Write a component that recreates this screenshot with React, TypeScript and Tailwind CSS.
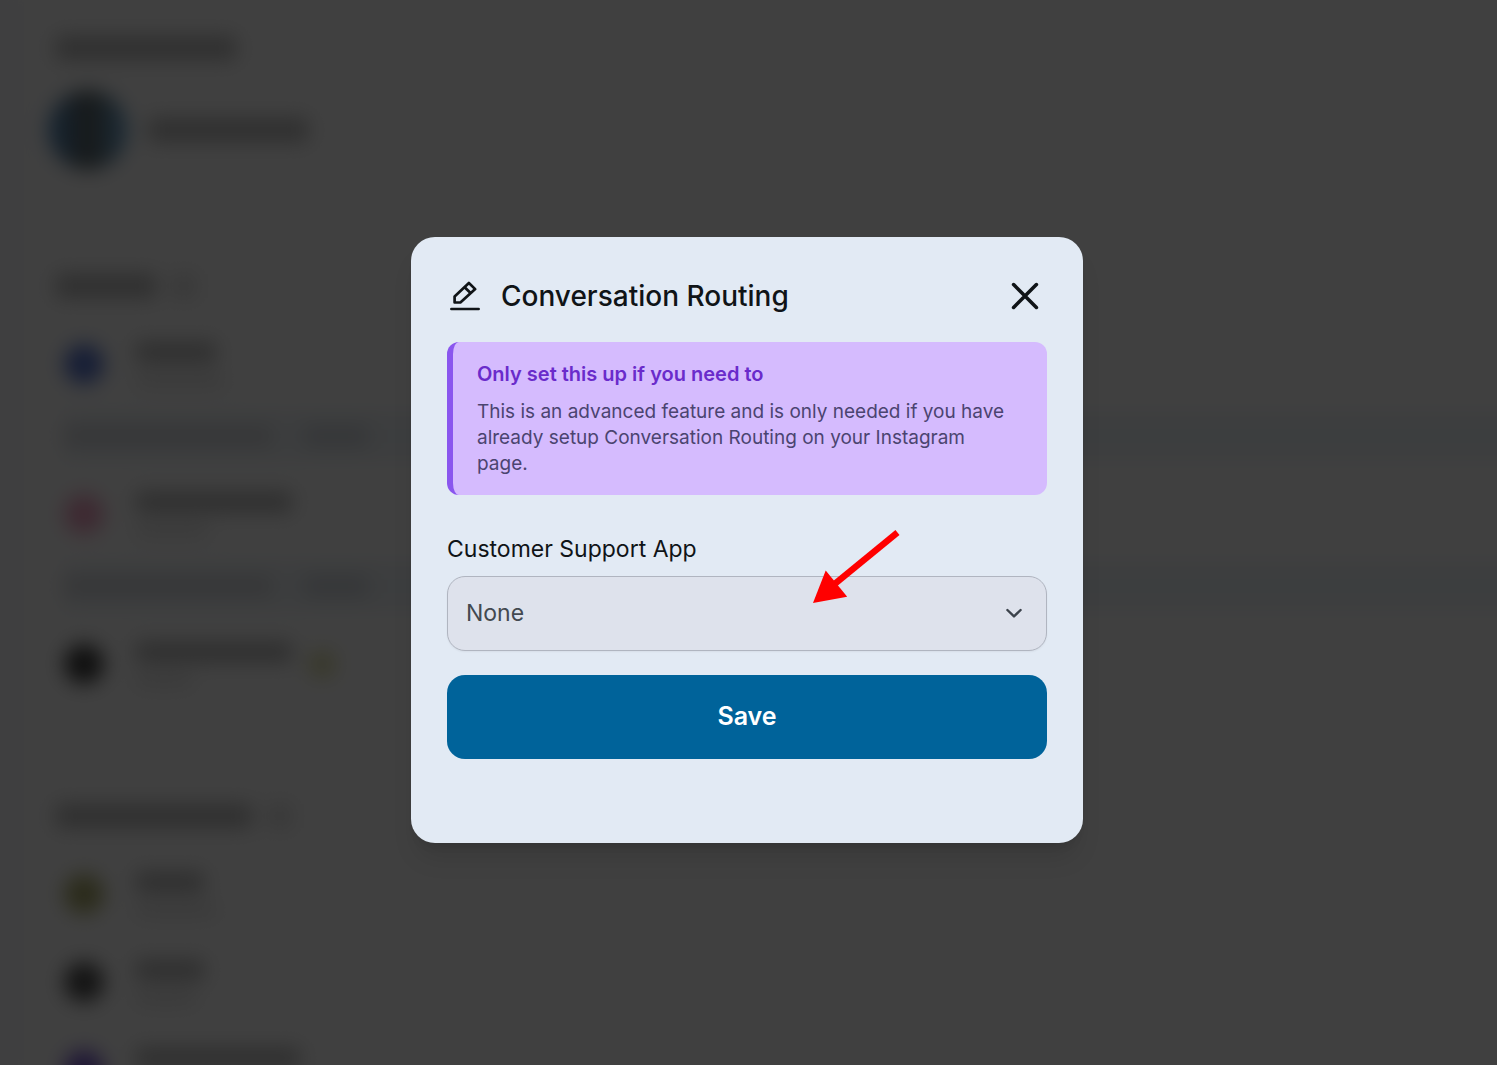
import { useState } from "react";

type RowProps = {
  dot: string;
  name: string;
  sub: string;
  badge?: boolean;
};

function Row({ dot, name, sub, badge }: RowProps) {
  return (
    <div className="flex h-12 items-center pl-10">
      <div className={`size-10 rounded-full ${dot}`} />
      <div className="ml-8 flex flex-col gap-3">
        <div className={`h-5 bg-[#b8b8b8] ${name}`} />
        <div className={`h-3 bg-[#e0e0e0] ${sub}`} />
      </div>
      {badge && <div className="ml-4 size-7 rounded-full bg-[#e0e0a8]" />}
    </div>
  );
}

function RoutingRow() {
  return (
    <div className="mt-6 -mr-8 mb-7.5 ml-10 flex h-12 items-center gap-8 bg-[#f0f5f9]">
      <div className="h-5 w-52 bg-[#d6d8dd]" />
      <div className="h-5 w-16 bg-[#d3d8df]" />
    </div>
  );
}

function SectionTitle({ title, count }: { title: string; count: string }) {
  return (
    <div className="flex h-6 gap-4 pl-8">
      <div className={`bg-[#bcbcbc] ${title}`} />
      <div className={`bg-[#dedede] ${count}`} />
    </div>
  );
}

function PageBehind() {
  return (
    <div aria-hidden="true" className="absolute inset-0 flex overflow-hidden bg-white">
      <div className="flex w-full blur-[10px]">
        <div className="-ml-8 w-14 shrink-0 bg-[#f9f9ff]" />
        <div className="flex-1">
          <section className="pt-9">
            <SectionTitle title="w-45" count="w-0" />
            <div className="mt-7.5 flex h-20 items-center gap-5 pl-6">
              <div className="size-20 rounded-full bg-linear-to-r from-[#4f92d0] via-[#5c6464] to-[#6cb0e4]" />
              <div className="h-6 w-40 bg-[#bcbcbc]" />
            </div>
          </section>

          <section className="mt-26">
            <SectionTitle title="w-25" count="w-6" />
            <div className="mt-10.5">
              <Row dot="bg-[#5a78d4]" name="w-20" sub="w-22" />
              <RoutingRow />
              <Row dot="bg-[#f4a4c4]" name="w-39" sub="w-18" />
              <RoutingRow />
              <Row dot="bg-[#404040]" name="w-39" sub="w-14" badge />
            </div>
          </section>

          <section className="mt-29">
            <SectionTitle title="w-49" count="w-6" />
            <div className="mt-10.5 flex flex-col gap-10">
              <Row dot="bg-[#acac6c]" name="w-17" sub="w-20" />
              <Row dot="bg-[#505050]" name="w-17" sub="w-15" />
              <Row dot="bg-[#7c5cd4]" name="w-41" sub="w-20" />
            </div>
          </section>
        </div>
      </div>
      <div className="absolute inset-0 bg-black/75" />
    </div>
  );
}

function EditIcon() {
  return (
    <svg className="size-8" viewBox="0 0 32 32" fill="none" stroke="currentColor" strokeWidth="2.7">
      <path d="M5.6 22.5V16.4L19.9 3L26.2 9.1L11.4 22.5Z" strokeLinejoin="round" />
      <path d="M15.6 7.2L21.8 13.2" />
      <path d="M2.4 29H29.6" strokeLinecap="round" />
    </svg>
  );
}

export default function App() {
  const [open, setOpen] = useState(true);
  const [supportApp, setSupportApp] = useState("none");

  const handleSubmit = (e: React.FormEvent) => {
    e.preventDefault();
    setOpen(false);
  };

  return (
    <div className="relative flex min-h-screen items-center justify-center overflow-hidden pt-[15px] pr-[3px] font-['Inter',sans-serif] text-[#101417]">
      <PageBehind />

      {open && (
        <div
          role="dialog"
          aria-modal="true"
          aria-labelledby="dialog-title"
          className="relative w-full max-w-2xl rounded-3xl bg-[#e2eaf4] px-9 pt-9 pb-[84px] shadow-xl"
        >
          <div className="flex h-[46px] items-center">
            <div className="ml-0.5">
              <EditIcon />
            </div>
            <h2 id="dialog-title" className="ml-5 text-[28px] font-medium">
              Conversation Routing
            </h2>
            <button
              type="button"
              aria-label="Close"
              onClick={() => setOpen(false)}
              className="ml-auto flex size-11 items-center justify-center"
            >
              <svg className="size-7" viewBox="0 0 28 28" fill="none" stroke="currentColor" strokeWidth="3.6" strokeLinecap="round">
                <path d="M2.6 2.6L25.4 25.4M25.4 2.6L2.6 25.4" />
              </svg>
            </button>
          </div>

          <div className="mt-[23px] rounded-xl border-l-6 border-[#8a56ee] bg-[#d5bbfe] pt-5 pr-8 pb-[18px] pl-6">
            <p className="text-xl leading-6 font-semibold text-[#6a2bcb]">
              Only set this up if you need to
            </p>
            <p className="mt-[13px] text-[19px] leading-[26px] text-[#4b4470]">
              This is an advanced feature and is only needed if you have already
              setup Conversation Routing on your Instagram page.
            </p>
          </div>

          <form onSubmit={handleSubmit}>
            <label htmlFor="support-app" className="mt-9 block text-[23px] leading-9">
              Customer Support App
            </label>
            <div className="relative mt-[9px]">
              <select
                id="support-app"
                value={supportApp}
                onChange={(e) => setSupportApp(e.target.value)}
                className="block h-[75px] w-full appearance-none rounded-[18px] border border-[#b0b5c0] bg-[#dee2ec] px-[18px] text-[23px] text-[#434950] shadow-xs"
              >
                <option value="none">None</option>
              </select>
              <svg
                className="pointer-events-none absolute top-7 right-6 h-[18px] w-[18px] text-[#3c434c]"
                viewBox="0 0 18 18"
                fill="none"
                stroke="currentColor"
                strokeWidth="2.4"
                strokeLinecap="round"
                strokeLinejoin="round"
              >
                <path d="M2.4 6L9 12.4L15.6 6" />
              </svg>
              <svg
                className="pointer-events-none absolute -top-[46px] right-[145px] h-[74px] w-[90px]"
                viewBox="0 0 90 74"
                fill="#ff0000"
              >
                <path d="M85.5 2.5L22 54.5" stroke="#ff0000" strokeWidth="6.4" />
                <path d="M1 73L13.7 40.5L35.2 66.8Z" />
              </svg>
            </div>

            <button
              type="submit"
              className="mt-6 h-[84px] w-full rounded-[18px] bg-[#00639a] text-[25px] font-semibold text-white"
            >
              Save
            </button>
          </form>
        </div>
      )}
    </div>
  );
}
